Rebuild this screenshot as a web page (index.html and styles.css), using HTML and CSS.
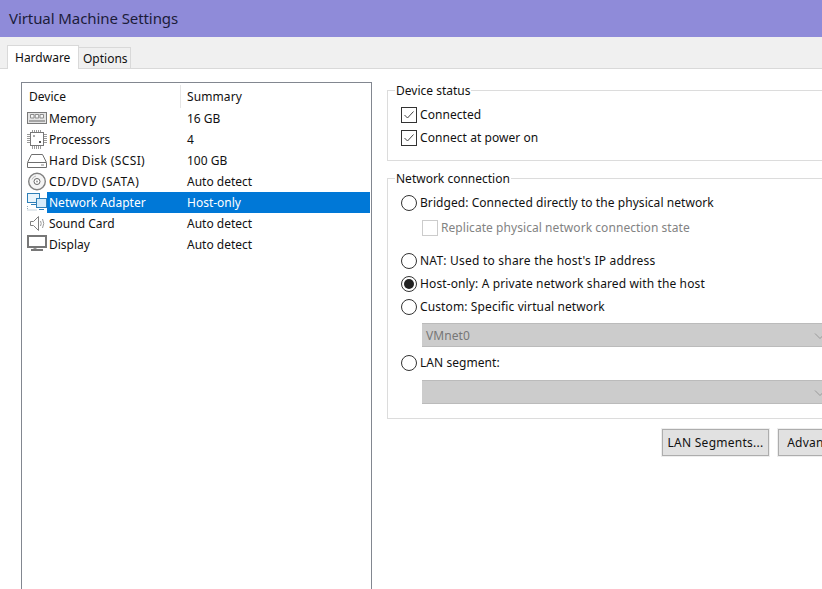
FILE: index.html
```html
<!DOCTYPE html>
<html lang="en">
<head>
<meta charset="utf-8">
<title>Virtual Machine Settings</title>
<link rel="stylesheet" href="styles.css">
</head>
<body>
<header class="titlebar">Virtual Machine Settings</header>
<nav class="tabs">
  <div class="tab active">Hardware</div>
  <div class="tab">Options</div>
</nav>
<main class="panel">
  <section class="devices">
    <div class="head">
      <div class="col-device">Device</div>
      <div class="col-summary">Summary</div>
    </div>
    <div class="row">
      <svg class="ico" viewBox="0 0 20 21"><rect x="0.500" y="4.500" width="19" height="11" fill="#e4e4e4" stroke="#7a7a7a"/><path d="M3.500 6.500h3.500v3.500h-3.500zM8.200 6.500h3.500v3.500h-3.500zM13 6.500h3.500v3.500h-3.500z" fill="#f6f6f6" stroke="#8c8c8c"/><path d="M2 13h16" stroke="#a5a5a5" stroke-width="2"/></svg>
      <span class="name">Memory</span><span class="sum">16 GB</span>
    </div>
    <div class="row">
      <svg class="ico" viewBox="0 0 20 21"><path d="M5.500 1v3M7.500 1v3M9.500 1v3M11.500 1v3M13.500 1v3M5.500 17v3M7.500 17v3M9.500 17v3M11.500 17v3M13.500 17v3M0 5.500h3M0 7.500h3M0 9.500h3M0 11.500h3M0 13.500h3M17 5.500h3M17 7.500h3M17 9.500h3M17 11.500h3M17 13.500h3" stroke="#9a9a9a"/><rect x="3.500" y="3.500" width="13" height="13" fill="#fff" stroke="#777"/><rect x="6" y="6" width="2" height="2" fill="#aaa"/><rect x="12" y="12" width="2" height="2" fill="#555"/></svg>
      <span class="name">Processors</span><span class="sum">4</span>
    </div>
    <div class="row">
      <svg class="ico" viewBox="0 0 20 21"><path d="M4.500 4.500h11l4 8v5H0.500v-5z" fill="#fff" stroke="#6e6e6e"/><path d="M1 12.500h18" stroke="#6e6e6e"/><path d="M14 15h3" stroke="#888"/></svg>
      <span class="name wide">Hard Disk (SCSI)</span><span class="sum">100 GB</span>
    </div>
    <div class="row">
      <svg class="ico" viewBox="0 0 20 21"><circle cx="10" cy="10.500" r="8.300" fill="#f4f4f4" stroke="#808080" stroke-width="1.400"/><path d="M5 8.500a5.500 5.500 0 0 1 4-3.500" fill="none" stroke="#bbb"/><circle cx="10" cy="10.500" r="3" fill="#fff" stroke="#666"/><circle cx="10" cy="10.500" r="1" fill="#999"/></svg>
      <span class="name wider">CD/DVD (SATA)</span><span class="sum">Auto detect</span>
    </div>
    <div class="row selected">
      <svg class="ico" viewBox="0 0 20 21"><rect x="0.500" y="1.500" width="12" height="9" fill="#eaf5fc" stroke="#2f80b8"/><path d="M4 12.500h5" stroke="#2f80b8"/><rect x="9.500" y="6.500" width="10" height="9" fill="#d6ecfa" stroke="#2f80b8"/><path d="M12 17.500h5" stroke="#2f80b8"/><path d="M0.500 14v4h9" fill="none" stroke="#8fa8b8" stroke-dasharray="1 1"/></svg>
      <span class="name">Network Adapter</span><span class="sum">Host-only</span>
    </div>
    <div class="row">
      <svg class="ico" viewBox="0 0 20 21"><path d="M3.500 8.500h3l5-5v14l-5-5h-3z" fill="#fff" stroke="#808080"/><path d="M13.500 8q1.500 2.500 0 5M15.500 6q2.500 4.500 0 9" fill="none" stroke="#999"/></svg>
      <span class="name">Sound Card</span><span class="sum">Auto detect</span>
    </div>
    <div class="row">
      <svg class="ico" viewBox="0 0 20 21"><rect x="1" y="2" width="18" height="11" fill="#fff" stroke="#777" stroke-width="2"/><path d="M8 14v2" stroke="#999" stroke-width="3"/><path d="M4 16h12" stroke="#777" stroke-width="2"/></svg>
      <span class="name">Display</span><span class="sum">Auto detect</span>
    </div>
  </section>

  <section class="settings">
    <div class="group status">
      <span class="legend">Device status</span>
      <div class="opt"><span class="box"><svg viewBox="0 0 14 14"><path d="M2.500 7l3 3 6-6.500" fill="none" stroke="#444"/></svg></span>Connected</div>
      <div class="opt"><span class="box"><svg viewBox="0 0 14 14"><path d="M2.500 7l3 3 6-6.500" fill="none" stroke="#444"/></svg></span>Connect at power on</div>
    </div>
    <div class="group network">
      <span class="legend">Network connection</span>
      <div class="opt"><span class="radio"></span>Bridged: Connected directly to the physical network</div>
      <div class="opt sub disabled"><span class="box off"></span>Replicate physical network connection state</div>
      <div class="opt gap-nat spaced-more"><span class="radio"></span>NAT: Used to share the host's IP address</div>
      <div class="opt spaced"><span class="radio on"></span>Host-only: A private network shared with the host</div>
      <div class="opt spaced"><span class="radio"></span>Custom: Specific virtual network</div>
      <div class="select">VMnet0<svg class="chev" viewBox="0 0 12 6"><path d="M1 .500l5 5 5-5" fill="none" stroke="#999"/></svg></div>
      <div class="opt gap-lan"><span class="radio"></span>LAN segment:</div>
      <div class="select last"><svg class="chev" viewBox="0 0 12 6"><path d="M1 .500l5 5 5-5" fill="none" stroke="#999"/></svg></div>
    </div>
    <div class="buttons">
      <div class="btn lan">LAN Segments...</div>
      <div class="btn adv">Advanced...</div>
    </div>
  </section>
</main>
</body>
</html>
```
FILE: styles.css
```css
html, body { margin: 0; padding: 0; height: 589px; overflow: hidden; }
body { width: 822px; background: #f0f0f0; font-family: "Noto Sans", "DejaVu Sans", sans-serif; font-size: 12px; color: #111; }
.titlebar { height: 37px; line-height: 37px; padding-left: 9px; background: #8f8bd9; color: #1c1c3a; font-size: 15px; letter-spacing: -.08px; }
.tabs { display: flex; align-items: flex-end; height: 31px; padding-left: 7px; box-sizing: border-box; }
.tab { height: 21px; line-height: 22px; padding: 0 4px; border: 1px solid #d9d9d9; border-bottom: none; background: #f0f0f0; margin-left: -1px; box-sizing: border-box; width: 53px; }
.tab.active { height: 24px; width: 72px; margin-left: 0; background: #fff; padding-left: 7px; position: relative; z-index: 1; margin-bottom: -1px; line-height: 23px; }
.panel { display: flex; background: #fff; border-top: 1px solid #d9d9d9; height: 521px; padding: 13px 0 0 21px; box-sizing: border-box; }
.devices { width: 351px; height: 520px; flex: none; border: 1px solid #828790; box-sizing: border-box; padding-top: 2px; }
.head { display: flex; height: 23px; line-height: 23px; }
.col-device { width: 159px; padding-left: 7px; box-sizing: border-box; border-right: 1px solid #e5e5e5; }
.col-summary { padding-left: 6px; letter-spacing: .1px; }
.row { display: flex; height: 21px; padding-left: 5px; }
.ico { width: 20px; height: 21px; flex: none; }
.name { width: 138px; padding-left: 2px; flex: none; height: 21px; line-height: 21px; }
.wide { letter-spacing: .38px; }
.wider { letter-spacing: .6px; }
.sum { flex: 1; height: 21px; line-height: 21px; }
.selected .name { background: #0078d7; color: #fff; }
.selected .sum { background: #0078d7; color: #fff; margin-right: 1px; }
.settings { width: 480px; flex: none; margin-left: 15px; padding-top: 8px; letter-spacing: .06px; }
.group { position: relative; border: 1px solid #dcdcdc; box-sizing: border-box; width: 480px; padding: 0 0 0 13px; }
.legend { position: absolute; left: 7px; top: -8px; background: #fff; padding: 0 1px; line-height: 16px; letter-spacing: 0; }
.status { height: 71px; padding-top: 12px; }
.network { height: 241px; margin-top: 17px; padding-top: 12px; }
.opt { display: flex; align-items: center; height: 23px; gap: 3px; }
.spaced { letter-spacing: .12px; }
.spaced-more { letter-spacing: .22px; }
.box { width: 16px; height: 16px; box-sizing: border-box; border: 1px solid #333; display: block; flex: none; background: #fff; }
.box svg { display: block; width: 14px; height: 14px; }
.box.off { border-color: #ccc; }
.radio { width: 16px; height: 16px; box-sizing: border-box; border: 1px solid #333; border-radius: 50%; flex: none; background: #fff; position: relative; }
.radio.on::after { content: ""; position: absolute; left: 2px; top: 2px; width: 10px; height: 10px; border-radius: 50%; background: #222; }
.sub { margin-left: 21px; height: 27px; }
.disabled { color: #838383; }
.gap-nat { margin-top: 8px; }
.gap-lan { margin-top: 4px; }
.select { position: relative; height: 24px; line-height: 24px; margin: 5px 0 0 21px; padding-left: 4px; background: #cccccc; border: 1px solid #bbb; border-width: 1px 0; box-sizing: border-box; color: #777; }
.select.last { margin-top: 6px; }
.chev { position: absolute; right: 40px; top: 9px; width: 12px; height: 6px; }
.buttons { display: flex; gap: 9px; padding: 10px 0 0 275px; }
.btn { height: 27px; line-height: 25px; box-sizing: border-box; border: 1px solid #adadad; background: #e1e1e1; text-align: center; white-space: nowrap; flex: none; outline: 1px solid #eee; letter-spacing: .25px; }
.lan { width: 107px; }
.adv { width: 86px; }
```
